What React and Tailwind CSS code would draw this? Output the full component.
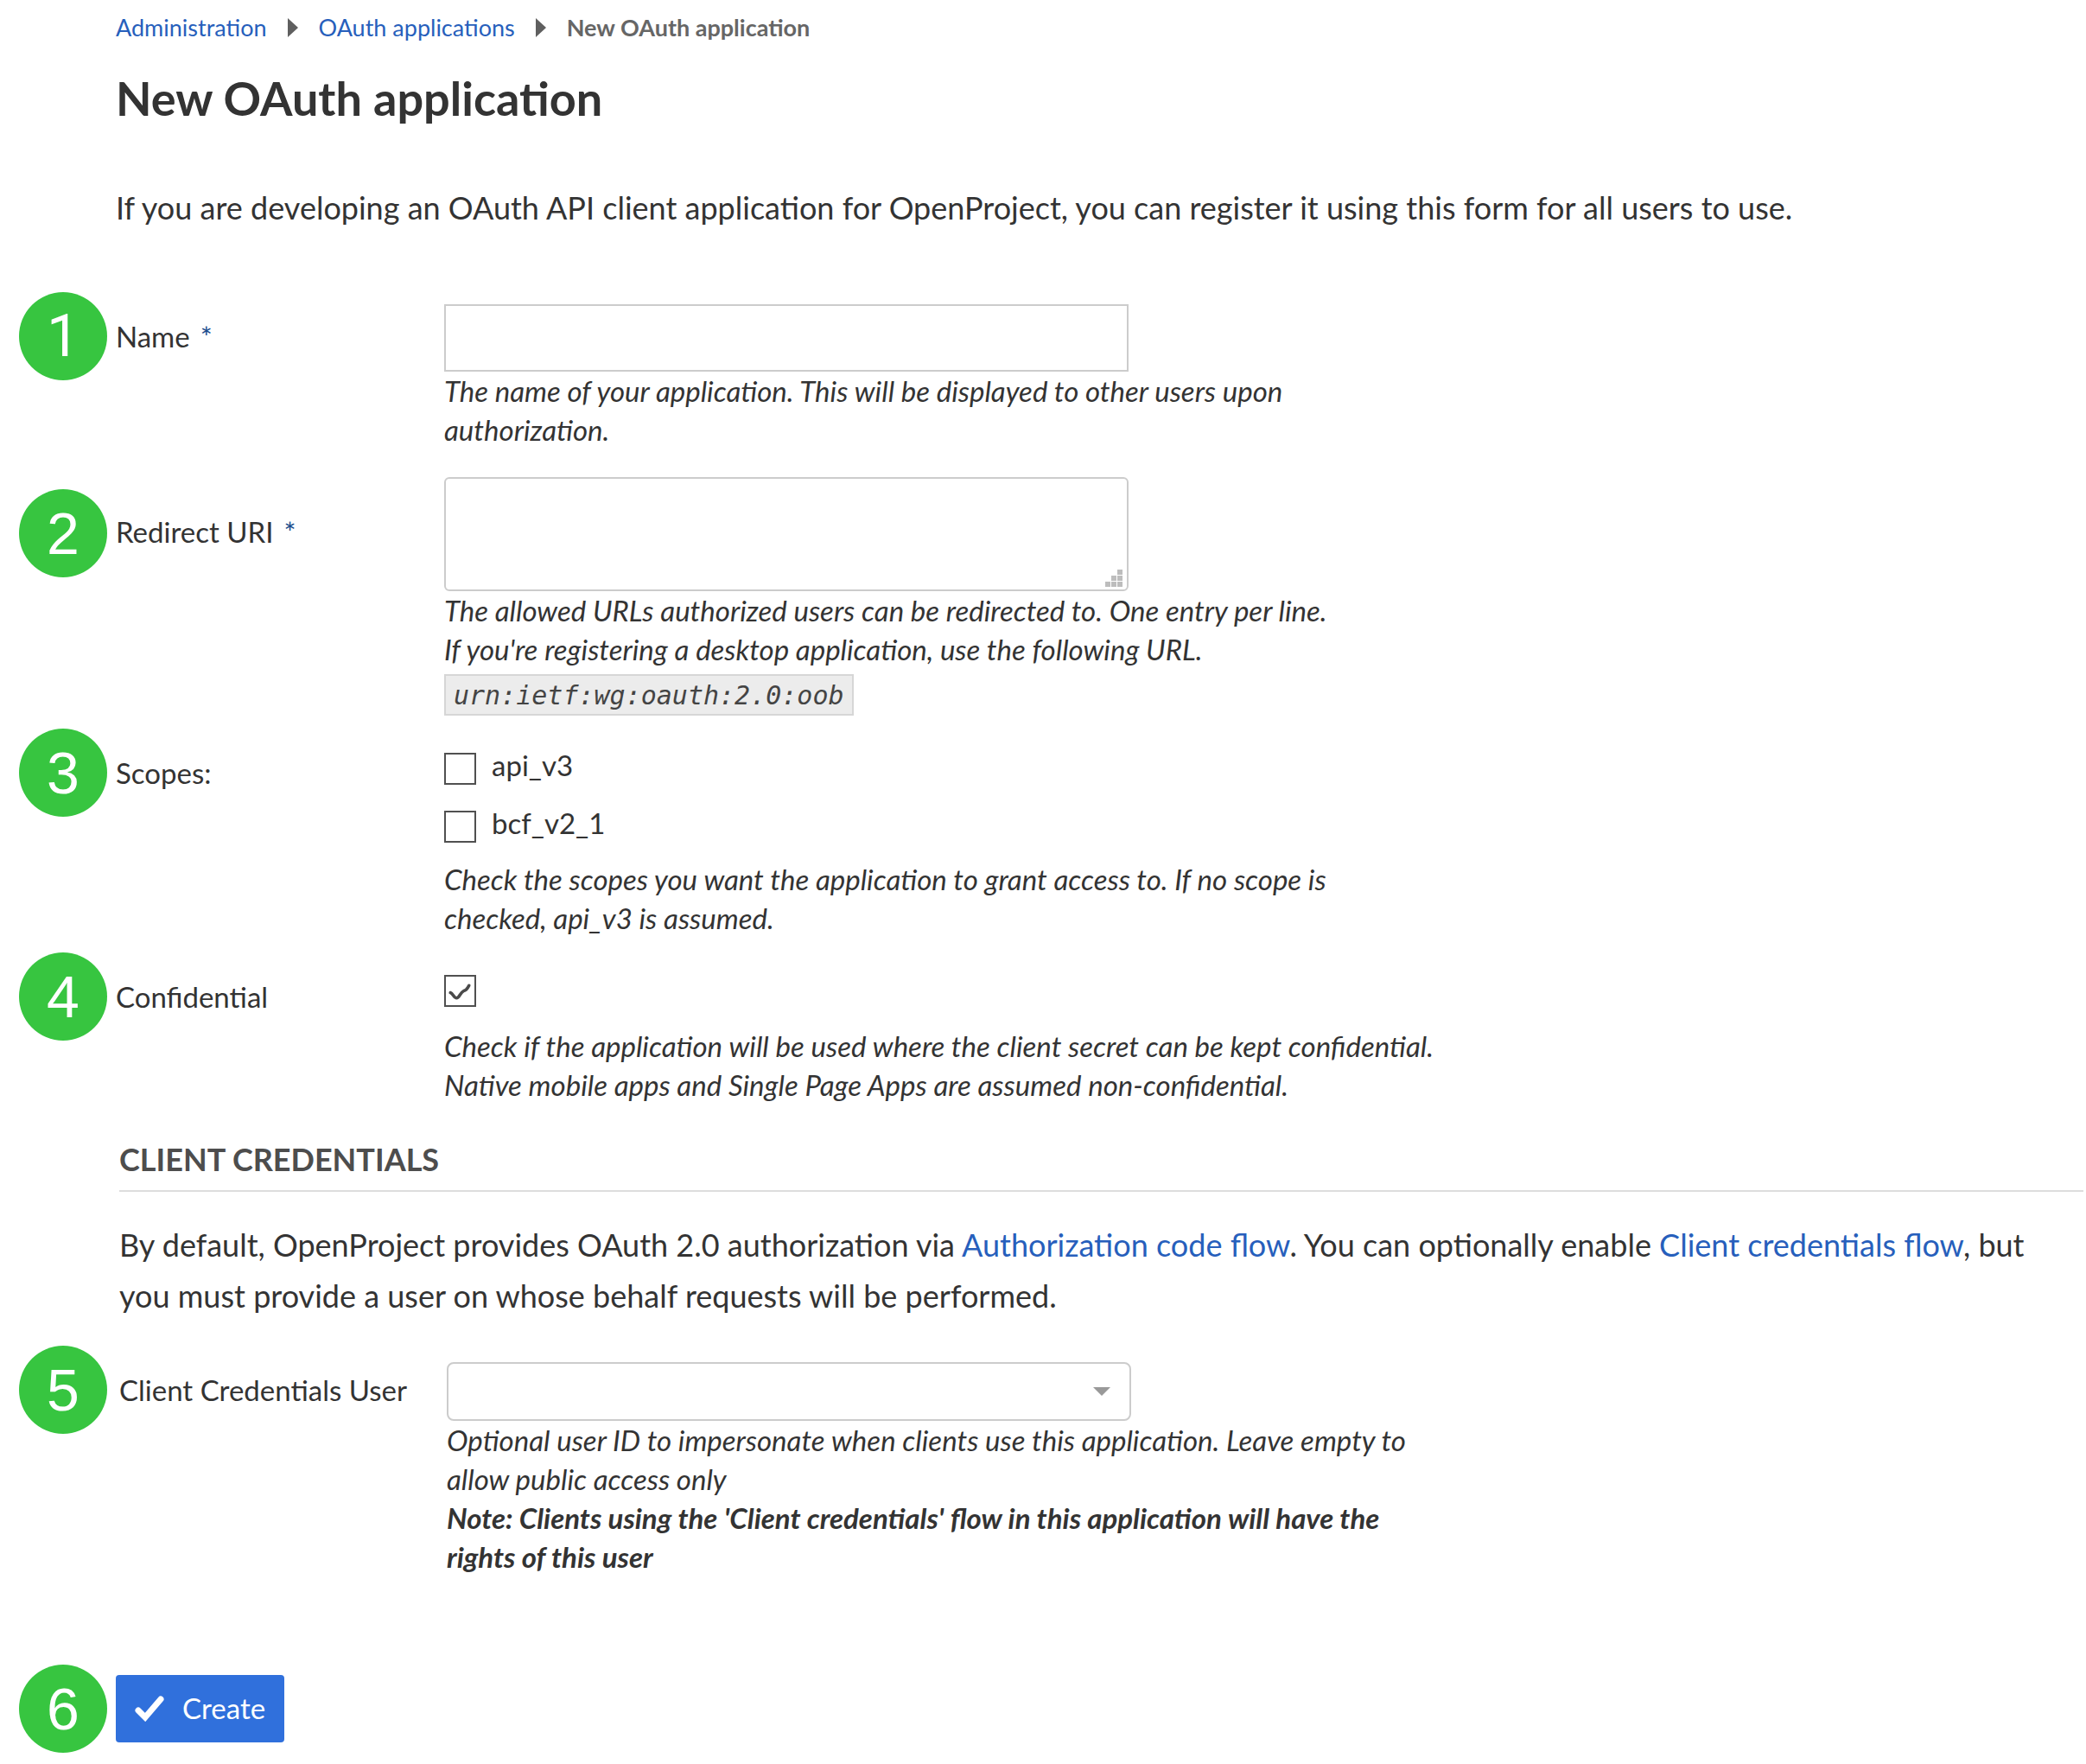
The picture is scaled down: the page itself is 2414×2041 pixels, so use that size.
const HINT = "max-w-[1150px] text-[33px] leading-[45px] italic";

function Badge({ n, className = "", font = "font-['Liberation_Sans',Arial,sans-serif]" }) {
  return (
    <span
      className={`ml-[22px] flex size-[102px] items-center justify-center rounded-full bg-[#37c540] text-[68px] leading-none text-white ${font} ${className}`}
    >
      {n}
    </span>
  );
}

function Row({ n, badge, badgeFont, label, htmlFor, required, labelClass = "pt-7", inset, className = "", children }) {
  const Tag = htmlFor ? "label" : "div";
  return (
    <div
      className={`grid items-start ${inset ? "grid-cols-[138px_379px_1fr]" : "grid-cols-[134px_380px_1fr]"} ${className}`}
    >
      <Badge n={n} className={badge} font={badgeFont} />
      <Tag htmlFor={htmlFor} className={`text-[33px] leading-[46px] ${labelClass}`}>
        {label}
        {required && <span className="ml-3 text-[#1a4b8c]">*</span>}
      </Tag>
      <div>{children}</div>
    </div>
  );
}

function Checkbox({ id, className = "", ...props }) {
  return (
    <span className={`relative block size-[37px] shrink-0 ${className}`}>
      <input
        id={id}
        type="checkbox"
        className="peer block size-[37px] appearance-none border-2 border-[#505050] bg-white"
        {...props}
      />
      <svg
        viewBox="0 0 36 36"
        className="pointer-events-none absolute inset-0 hidden size-[37px] peer-checked:block"
        fill="none"
        stroke="#4a4a4a"
        strokeWidth="3.5"
        strokeLinecap="round"
        strokeLinejoin="round"
      >
        <path d="M7 20 C10 21 11 26 14 26 C17 26 18 20 22 18 C26 17 26 15 28 12" />
      </svg>
    </span>
  );
}

function Separator() {
  return (
    <svg viewBox="0 0 12 22" className="h-[22px] w-3" fill="#5f5f5f" aria-hidden="true">
      <path d="M0 0 L12 11 L0 22 Z" />
    </svg>
  );
}

export default function App() {
  return (
    <main className="min-h-screen bg-white pt-[14px] pb-3 font-[Lato,sans-serif] text-[#333]">
      <header className="pl-[134px]">
        <nav aria-label="Breadcrumb" className="flex items-center gap-6 text-[27px] leading-9">
          <a href="#administration" className="text-[#275fbc]">Administration</a>
          <Separator />
          <a href="#applications" className="text-[#275fbc]">OAuth applications</a>
          <Separator />
          <span className="font-bold text-[#666]">New OAuth application</span>
        </nav>
        <h1 className="mt-8 text-[54px] leading-[64px] font-bold">New OAuth application</h1>
        <p className="mt-16 text-[36px] leading-[60px]">
          If you are developing an OAuth API client application for OpenProject, you can register it using this form for
          all users to use.
        </p>
      </header>

      <form className="mt-[68px]" onSubmit={(e) => e.preventDefault()}>
        <Row n={1} badgeFont="font-[Roboto,sans-serif]" label="Name" htmlFor="name" required>
          <input
            id="name"
            type="text"
            className="mt-[14px] block h-[78px] w-full max-w-[792px] border-2 border-[#ccc] px-3 text-[33px] outline-none"
          />
          <p className={HINT}>
            The name of your application. This will be displayed to other users upon authorization.
          </p>
        </Row>

        <Row n={2} label="Redirect URI" htmlFor="uri" required badge="mt-[14px]" labelClass="pt-10" className="mt-8">
          <div className="relative w-full max-w-[792px]">
            <textarea
              id="uri"
              className="block h-[132px] w-full resize-none rounded-md border-2 border-[#ccc] px-3 text-[33px] outline-none"
            />
            <svg viewBox="0 0 20 20" className="absolute right-[7px] bottom-[5px] size-5" fill="#bdbdbd" aria-hidden="true">
              <rect x="14" y="0" width="6" height="6" />
              <rect x="7" y="7" width="6" height="6" />
              <rect x="14" y="7" width="6" height="6" />
              <rect x="0" y="14" width="6" height="6" />
              <rect x="7" y="14" width="6" height="6" />
              <rect x="14" y="14" width="6" height="6" />
            </svg>
          </div>
          <p className={HINT}>
            The allowed URLs authorized users can be redirected to. One entry per line.
            <br />
            If you're registering a desktop application, use the following URL.
          </p>
          <code className="mt-[6px] block h-12 w-fit border-2 border-[#d6d6d6] bg-[#ececec] px-[9px] font-['DejaVu_Sans_Mono',monospace] text-[30px] leading-[46px] text-[#444] italic">
            urn:ietf:wg:oauth:2.0:oob
          </code>
        </Row>

        <Row n={3} label="Scopes:" className="mt-[15px]">
          <div className="flex flex-col gap-[21px] pt-[19px]">
            {["api_v3", "bcf_v2_1"].map((scope) => (
              <div key={scope} className="flex h-[46px] items-start gap-[18px]">
                <Checkbox id={scope} className="mt-[9px]" />
                <label htmlFor={scope} className="text-[33px] leading-[46px]">{scope}</label>
              </div>
            ))}
          </div>
          <p className={`mt-5 ${HINT}`}>
            Check the scopes you want the application to grant access to. If no scope is
            <br />
            checked, api_v3 is assumed.
          </p>
        </Row>

        <Row n={4} label="Confidential" htmlFor="confidential" className="mt-[17px]">
          <Checkbox id="confidential" defaultChecked className="mt-[26px]" />
          <p className={`mt-[23px] ${HINT}`}>
            Check if the application will be used where the client secret can be kept confidential. Native mobile apps
            and Single Page Apps are assumed non-confidential.
          </p>
        </Row>

        <section className="mt-10 pr-[3px] pl-[138px]">
          <h2 className="border-b-2 border-[#ddd] pb-[13px] text-[36px] leading-[46px] font-bold text-[#4d4d4d] uppercase">
            Client credentials
          </h2>
          <p className="mt-8 pr-8 text-[36px] leading-[59px]">
            By default, OpenProject provides OAuth 2.0 authorization via{" "}
            <a href="#code-flow" className="text-[#275fbc]">Authorization code flow</a>. You can optionally enable{" "}
            <a href="#credentials-flow" className="text-[#275fbc]">Client credentials flow</a>, but you must provide a
            user on whose behalf requests will be performed.
          </p>
        </section>

        <Row n={5} label="Client Credentials User" htmlFor="user" inset className="mt-7">
          <div className="relative mt-[19px] w-full max-w-[792px]">
            <select
              id="user"
              className="block h-[68px] w-full appearance-none rounded-lg border-2 border-[#ccc] bg-white px-3 text-[33px] outline-none"
            >
              <option value=""></option>
            </select>
            <svg
              viewBox="0 0 20 10"
              className="pointer-events-none absolute top-[29px] right-6 h-[10px] w-5"
              fill="#999"
              aria-hidden="true"
            >
              <path d="M0 0 H20 L10 10 Z" />
            </svg>
          </div>
          <p className={HINT}>
            Optional user ID to impersonate when clients use this application. Leave empty to allow public access only
            <br />
            <strong>
              Note: Clients using the 'Client credentials' flow in this application will have the rights of this user
            </strong>
          </p>
        </Row>

        <div className="mt-[102px] grid grid-cols-[134px_1fr] items-start">
          <Badge n={6} />
          <button
            type="submit"
            className="mt-3 flex h-[78px] items-center gap-[21px] justify-self-start rounded-sm bg-[#3070dc] px-[22px] text-[33px] text-white"
          >
            <svg viewBox="0 0 34 30" className="h-[30px] w-[34px]" fill="none" aria-hidden="true">
              <path d="M4 17 L12 25 L30 4" stroke="#fff" strokeWidth="7" strokeLinecap="round" />
            </svg>
            Create
          </button>
        </div>
      </form>
    </main>
  );
}
